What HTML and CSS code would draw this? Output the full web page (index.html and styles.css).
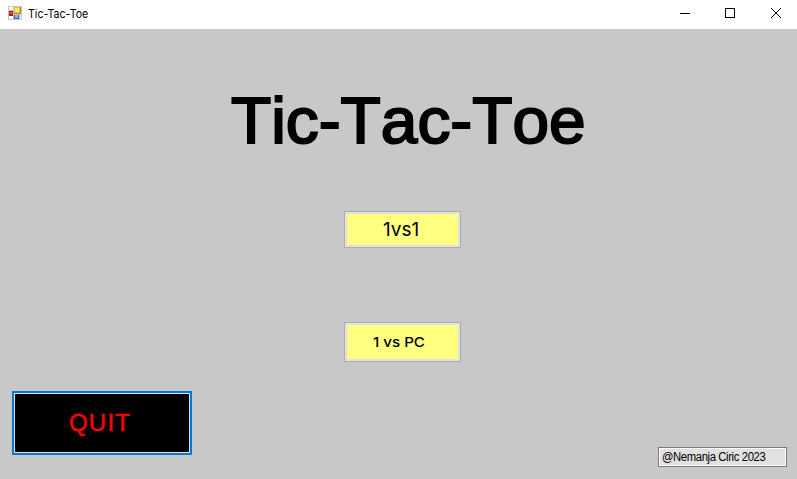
FILE: index.html
```html
<!DOCTYPE html>
<html lang="en">
<head>
<meta charset="utf-8">
<title>Tic-Tac-Toe</title>
<link rel="stylesheet" href="styles.css">
</head>
<body>
<div class="window">
  <header class="titlebar">
    <svg class="app-icon" width="14" height="14" viewBox="0 0 14 14" shape-rendering="crispEdges">
      <path fill="#c4c4c4" d="M0 0h14v14H0z"/>
      <path fill="#fff" d="M1 1h4v3H1zM1 10h4v3H1zM12 9h1v4h-1z"/>
      <path fill="#a51d14" d="M1 5h4v5H1z"/><path fill="#e5634f" d="M2 6h2v2H2z"/>
      <path fill="#c68a00" d="M6 1h7v7H6z"/><path fill="#f3bd27" d="M6 1h6v6H6z"/><path fill="#ffe47a" d="M7 2h4v4H7z"/>
      <path fill="#316ac5" d="M6 9h5v4H6z"/><path fill="#80b5ff" d="M7 9h3v3H7z"/>
    </svg>
    <span class="caption"><span class="fit fit-caption">Tic-Tac-Toe</span></span>
    <svg class="controls" width="102" height="12" viewBox="0 0 102 12" fill="none" stroke="#000">
      <path d="M0 5.5h10" shape-rendering="crispEdges"/>
      <path d="M45.5 .5h9v9h-9z" shape-rendering="crispEdges"/>
      <path d="M91 0l10 10M101 0l-10 10"/>
    </svg>
  </header>
  <main class="form">
    <h1 class="heading"><span class="fit fit-heading">Tic-Tac-Toe</span></h1>
    <button class="btn btn-duel"><span class="fit fit-duel">1vs1</span></button>
    <button class="btn btn-pc"><span class="fit fit-pc">1 vs PC</span></button>
    <footer class="bottom">
      <button class="btn btn-quit"><span class="fit fit-quit">QUIT</span></button>
      <div class="credit"><span class="fit fit-credit">@Nemanja Ciric 2023</span></div>
    </footer>
  </main>
</div>
</body>
</html>
```
FILE: styles.css
```css
* { box-sizing: border-box; }
body { margin: 0; font-family: Inter, "Liberation Sans", sans-serif; color: #000; }
.window { width: 797px; height: 479px; display: flex; flex-direction: column; background: #c8c8c8; overflow: hidden; }
.titlebar { height: 29px; flex: none; background: #fff; display: flex; align-items: flex-start; padding: 6px 15px 0 8px; }
.app-icon { flex: none; }
.caption { margin-left: 6px; font-size: 11.5px; line-height: 16px; }
.controls { margin-left: auto; margin-top: 2px; }
.form { flex: 1; display: flex; flex-direction: column; align-items: flex-start; }
.fit { display: inline-block; white-space: nowrap; transform-origin: left center; }
.fit-caption { transform: scaleX(.92); }
.fit-pc { transform: scaleX(1.12); }
.fit-credit { transform: scaleX(.94); letter-spacing: -.4px; }
.fit-heading { transform: scaleX(1.028); }
.heading { margin: 52px 0 0 231px; height: 80px; font-family: "Liberation Sans", Arial, sans-serif; font-size: 64px; line-height: 80px; font-weight: 400; font-kerning: none; -webkit-text-stroke: 2px #000; }
.btn { display: flex; align-items: center; padding: 0; font-family: inherit; background: #ffff80; border: 1px solid #adadad; box-shadow: inset 0 0 0 2px #e1e1e1; border-radius: 0; color: #000; }
.btn-duel { margin: 50px 0 0 344px; width: 117px; height: 37px; padding-left: 38px; font-size: 19px; }
.btn-pc { margin: 74px 0 0 344px; width: 117px; height: 40px; padding: 0 0 1px 28px; font-size: 13.5px; font-weight: 500; }
.bottom { width: 100%; margin-top: 29px; padding: 0 10px 0 12px; display: flex; justify-content: space-between; align-items: flex-start; }
.btn-quit { width: 180px; height: 64px; padding: 0 0 1px 55px; background: #000; border: 2px solid #0078d7; box-shadow: inset 0 0 0 1px #e1e1e1; color: #f00; font-family: "Liberation Sans", Arial, sans-serif; font-size: 24px; -webkit-text-stroke: .5px #f00; letter-spacing: 1.2px; }
.credit { margin-top: 56px; width: 129px; height: 20px; padding-left: 3px; background: #e1e1e1; border: 1px solid #7a7a7a; box-shadow: inset 0 0 0 1px #fff; font-family: "Liberation Sans", Arial, sans-serif; font-size: 12px; line-height: 18px; }
```
